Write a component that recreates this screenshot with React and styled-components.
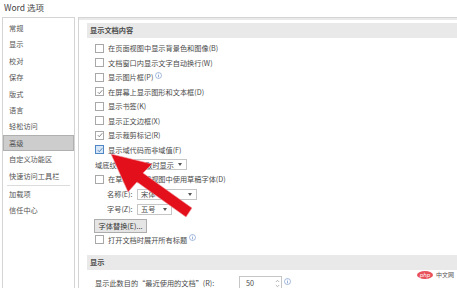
import React from "react";
import styled, { createGlobalStyle } from "styled-components";

const GlobalStyle = createGlobalStyle`
  html, body {
    margin: 0;
    padding: 0;
    background: #ffffff;
  }
  body {
    width: 457px;
    height: 288px;
    overflow: hidden;
    font-family: "Noto Sans CJK SC", "Noto Sans", sans-serif;
    color: #4a4a4a;
  }
`;

const navItems = [
  "常规",
  "显示",
  "校对",
  "保存",
  "版式",
  "语言",
  "轻松访问",
  "高级",
  "自定义功能区",
  "快速访问工具栏",
];

const checkRows = [
  { text: "在页面视图中显示背景色和图像(B)" },
  { text: "文档窗口内显示文字自动换行(W)" },
  { text: "显示图片框(P)", info: true },
  { text: "在屏幕上显示图形和文本框(D)", checked: true },
  { text: "显示书签(K)" },
  { text: "显示正文边框(X)" },
  { text: "显示裁剪标记(R)", checked: true },
  { text: "显示域代码而非域值(F)", checked: true, focused: true },
];

function Checkbox({ checked, focused }) {
  return (
    <Box $focused={focused}>
      {checked && (
        <svg width="6" height="6" viewBox="0 0 6 6">
          <polyline
            points="0.8,3.2 2.3,4.7 5.3,1.2"
            fill="none"
            stroke={focused ? "#3c6fa8" : "#666"}
            strokeWidth="0.8"
          />
        </svg>
      )}
    </Box>
  );
}

function InfoIcon() {
  return (
    <InfoWrap>
      <svg width="7" height="7" viewBox="0 0 7 7">
        <circle cx="3.5" cy="3.5" r="3" fill="none" stroke="#6b8fc9" strokeWidth="0.6" />
        <circle cx="3.5" cy="2" r="0.45" fill="#6b8fc9" />
        <line x1="3.5" y1="3" x2="3.5" y2="5.3" stroke="#6b8fc9" strokeWidth="0.7" />
      </svg>
    </InfoWrap>
  );
}

function Dropdown({ value, width }) {
  return (
    <Select $width={width}>
      <span>{value}</span>
      <Caret />
    </Select>
  );
}

function App() {
  return (
    <>
      <GlobalStyle />
      <Window>
        <Title>Word 选项</Title>
        <Main>
          <Nav>
            {navItems.map((item) => (
              <NavItem key={item} $active={item === "高级"}>
                {item}
              </NavItem>
            ))}
            <NavDivider />
            <NavItem>加载项</NavItem>
            <NavItem>信任中心</NavItem>
          </Nav>

          <Panel>
            <SectionHeader>显示文档内容</SectionHeader>
            {checkRows.map((row) => (
              <Row key={row.text}>
                <Checkbox checked={row.checked} focused={row.focused} />
                <Label>{row.text}</Label>
                {row.info && <InfoIcon />}
              </Row>
            ))}
            <FieldRow $indent={8}>
              <FieldLabel $width={39}>域底纹(H):</FieldLabel>
              <Dropdown value="选取时显示" width={53} />
            </FieldRow>
            <Row>
              <Checkbox />
              <Label>在草稿和大纲视图中使用草稿字体(D)</Label>
            </Row>
            <FieldRow $indent={20}>
              <FieldLabel $width={30}>名称(E):</FieldLabel>
              <Dropdown value="宋体" width={60} />
            </FieldRow>
            <FieldRow $indent={20}>
              <FieldLabel $width={30}>字号(Z):</FieldLabel>
              <Dropdown value="五号" width={35} />
            </FieldRow>
            <ButtonRow>
              <Button>字体替换(E)...</Button>
            </ButtonRow>
            <Row>
              <Checkbox />
              <Label>打开文档时展开所有标题</Label>
              <InfoIcon />
            </Row>

            <SectionHeader $gap={8}>显示</SectionHeader>
            <LastRow>
              <FieldLabel $width={144}>显示此数目的“最近使用的文档”(R):</FieldLabel>
              <SpinBox>
                <span>50</span>
                <Spinner>
                  <svg width="5" height="9" viewBox="0 0 5 9">
                    <polyline points="0.8,3 2.5,1.3 4.2,3" fill="none" stroke="#888" strokeWidth="0.6" />
                    <polyline points="0.8,6 2.5,7.7 4.2,6" fill="none" stroke="#888" strokeWidth="0.6" />
                  </svg>
                </Spinner>
              </SpinBox>
              <InfoIcon />
            </LastRow>
          </Panel>
        </Main>

        <Arrow width="457" height="288" viewBox="0 0 457 288">
          <polygon
            points="111,154 152,164 143,173 192,208 186,217 137,182 128,192"
            fill="#e3101b"
            stroke="#f2a0a4"
            strokeWidth="0.6"
          />
        </Arrow>

        <Watermark>
          <PhpBadge>php</PhpBadge>
          <span>中文网</span>
        </Watermark>
      </Window>
    </>
  );
}

const Window = styled.div`
  position: relative;
  width: 457px;
  height: 288px;
  overflow: hidden;
`;

const Title = styled.div`
  height: 16px;
  padding-left: 4px;
  font-size: 8.5px;
  line-height: 14px;
  color: #444;
`;

const Main = styled.div`
  display: flex;
  gap: 3px;
  padding-left: 2px;
  margin-top: 1px;
  height: 290px;
`;

const Nav = styled.div`
  width: 71px;
  flex-shrink: 0;
  border: 1px solid #d4d4d4;
  border-bottom: none;
  padding-top: 2px;
`;

const NavItem = styled.div`
  height: 16.4px;
  padding-left: 5px;
  font-size: 7.2px;
  color: #555;
  box-sizing: border-box;
  background: ${(p) => (p.$active ? "#cdcdcd" : "transparent")};
  border: 1px solid ${(p) => (p.$active ? "#b0b0b0" : "transparent")};
  line-height: 15px;
`;

const NavDivider = styled.div`
  height: 1px;
  margin: 1px 4px 0 4px;
  background: #dcdcdc;
`;

const Panel = styled.div`
  flex: 1;
  border-left: 1px solid #d4d4d4;
  border-top: 1px solid #d4d4d4;
  padding-left: 8px;
  position: relative;

  &::before {
    content: "";
    display: block;
    height: 2px;
    margin-left: -8px;
    background: #e9e9e9;
  }
`;

const SectionHeader = styled.div`
  margin-top: ${(p) => p.$gap ?? 3}px;
  height: 15px;
  line-height: 15px;
  padding-left: 3px;
  background: #e9e9e9;
  font-size: 7.2px;
  font-weight: 700;
  color: #4a4a4a;
`;

const Row = styled.div`
  display: flex;
  align-items: center;
  height: 14.5px;
  padding-left: 8px;

  &:nth-of-type(2) {
    margin-top: 3px;
  }
`;

const Box = styled.div`
  width: 7px;
  height: 7px;
  flex-shrink: 0;
  display: flex;
  align-items: center;
  justify-content: center;
  border: 1px solid ${(p) => (p.$focused ? "#4f86c6" : "#a8a8a8")};
  background: ${(p) => (p.$focused ? "#d6e6f6" : "#fff")};
  margin-right: 4px;
`;

const Label = styled.span`
  font-size: 7.2px;
  color: #4a4a4a;
  white-space: nowrap;
`;

const InfoWrap = styled.span`
  display: inline-flex;
  margin-left: 2px;
  margin-top: -4px;
`;

const FieldRow = styled.div`
  display: flex;
  align-items: center;
  height: 15px;
  padding-left: ${(p) => p.$indent}px;
`;

const FieldLabel = styled.span`
  width: ${(p) => p.$width}px;
  flex-shrink: 0;
  font-size: 7.2px;
  color: #4a4a4a;
  white-space: nowrap;
`;

const Select = styled.div`
  width: ${(p) => p.$width}px;
  height: 11px;
  box-sizing: border-box;
  border: 1px solid #c6c6c6;
  background: #fff;
  display: flex;
  align-items: center;
  justify-content: space-between;
  padding: 0 4px 0 3px;
  font-size: 7.2px;
  color: #4a4a4a;
`;

const Caret = styled.span`
  width: 0;
  height: 0;
  border-left: 2.5px solid transparent;
  border-right: 2.5px solid transparent;
  border-top: 3px solid #555;
`;

const ButtonRow = styled.div`
  padding-left: 7px;
  margin-top: 2px;
  height: 14px;
`;

const Button = styled.div`
  width: 53px;
  height: 14px;
  box-sizing: border-box;
  border: 1px solid #adadad;
  background: #e5e5e5;
  font-size: 7.2px;
  line-height: 12px;
  text-align: center;
  color: #333;
`;

const LastRow = styled.div`
  display: flex;
  align-items: center;
  margin-top: 6px;
  height: 14px;
  padding-left: 8px;
`;

const SpinBox = styled.div`
  width: 43px;
  height: 14px;
  box-sizing: border-box;
  border: 1px solid #c6c6c6;
  display: flex;
  align-items: center;
  justify-content: space-between;
  padding: 0 1px 0 6px;
  font-size: 7.2px;
  color: #4a4a4a;
`;

const Spinner = styled.span`
  display: inline-flex;
`;

const Arrow = styled.svg`
  position: absolute;
  left: 0;
  top: 0;
  pointer-events: none;
`;

const Watermark = styled.div`
  position: absolute;
  left: 417px;
  top: 270px;
  display: flex;
  align-items: center;
  gap: 3px;
  font-size: 6px;
  color: #555;
`;

const PhpBadge = styled.span`
  display: inline-block;
  width: 16px;
  height: 8px;
  border-radius: 50%;
  background: #e8515a;
  color: #fff;
  font-family: "DejaVu Sans", sans-serif;
  font-style: italic;
  font-size: 5.5px;
  line-height: 8px;
  text-align: center;
`;

export default App;
